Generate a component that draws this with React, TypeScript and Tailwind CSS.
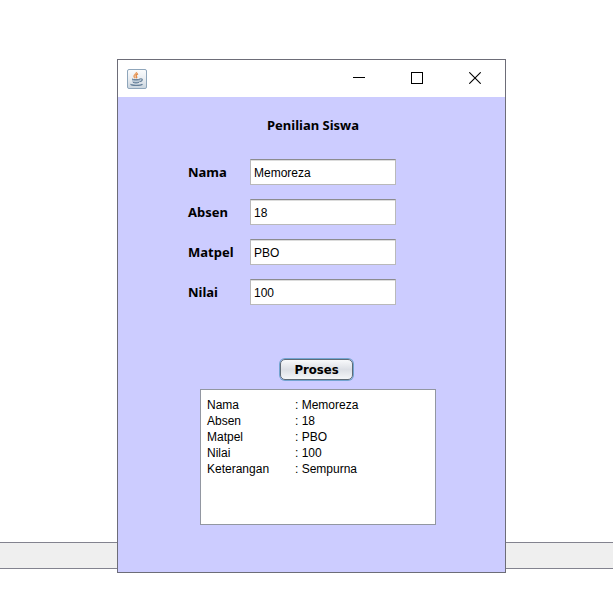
import { useState } from "react";

const FIELDS = [
  { id: "nama", label: "Nama", value: "Memoreza" },
  { id: "absen", label: "Absen", value: "18" },
  { id: "matpel", label: "Matpel", value: "PBO" },
  { id: "nilai", label: "Nilai", value: "100" },
];

const RESULT = [
  "Nama\t: Memoreza",
  "Absen\t: 18",
  "Matpel\t: PBO",
  "Nilai\t: 100",
  "Keterangan\t: Sempurna",
].join("\n");

function JavaIcon() {
  return (
    <svg width="20" height="20" viewBox="0 0 20 20" fill="none" aria-hidden="true">
      <defs>
        <linearGradient id="tile" x1="0" y1="0" x2="0" y2="1">
          <stop offset="0" stopColor="#fbfcfd" />
          <stop offset="0.5" stopColor="#e9edf1" />
          <stop offset="1" stopColor="#c9d4de" />
        </linearGradient>
      </defs>
      <rect x="0.5" y="0.5" width="19" height="19" rx="1.5" fill="url(#tile)" stroke="#8fa6bb" />
      <path d="M9.500 3c.4 1.800-2.700 2.600-2.500 4.300.1.900 1 1.300 1.200 2" stroke="#e9a064" strokeWidth="1.500" />
      <path d="M11 4.800c-2.200 1-2.300 2-1.500 2.800.4.500.2 1-.3 1.500" stroke="#e58a45" strokeWidth="1.500" />
      <path d="M5 9.800c1.500.8 6.500.8 8 0l-.8 3.800c-1.500.7-4.900.7-6.400 0z" fill="#8fa5b8" />
      <path d="M5 10c1.500.9 6.500.9 8 0M6 13.400c1.500.7 4.500.7 6 0" stroke="#66809a" />
      <path d="M5.800 11.900c1.500.6 5 .6 6.500 0" stroke="#dde5ec" strokeWidth="0.800" />
      <path d="M13 10c3.200-.7 3 2-.4 2.700" stroke="#66809a" strokeWidth="1.200" />
      <path d="M4 15c-.6 1.700 9.500 1.900 11.500.2" stroke="#66809a" strokeWidth="1.400" />
    </svg>
  );
}

function TitleBar() {
  const button = "flex h-9 w-[58px] items-center justify-center";
  return (
    <header className="flex h-[37px] items-center justify-between bg-white pr-px pl-[9px]">
      <JavaIcon />
      <div className="flex self-start">
        <button type="button" aria-label="Minimize" className={button}>
          <svg width="12" height="12" shapeRendering="crispEdges" stroke="#000">
            <path d="M0 5.500h12" />
          </svg>
        </button>
        <button type="button" aria-label="Maximize" className={button}>
          <svg width="12" height="12" shapeRendering="crispEdges" fill="none" stroke="#000">
            <rect x="0.5" y="0.5" width="11" height="11" />
          </svg>
        </button>
        <button type="button" aria-label="Close" className={button}>
          <svg width="12" height="12" stroke="#000" strokeWidth="1.100">
            <path d="M.3.3l11.400 11.400M11.700.3L.3 11.700" />
          </svg>
        </button>
      </div>
    </header>
  );
}

export default function App() {
  const [values, setValues] = useState<Record<string, string>>(
    Object.fromEntries(FIELDS.map((f) => [f.id, f.value])),
  );

  return (
    <main className="relative min-h-screen bg-white pt-[59px] pr-[107px] pl-[117px] text-black">
      <div className="absolute inset-x-0 top-[542px] h-[27px] border-y border-[#83838f] bg-[#efefef]" />
      <section className="relative border border-[#6d6d78] bg-[#ccccff] pb-[47px]">
        <TitleBar />
        <form
          className="flex flex-col items-center pt-5 font-['Noto_Sans','DejaVu_Sans',sans-serif] text-[13px] leading-4 font-bold"
          onSubmit={(e) => e.preventDefault()}
        >
          <h1 className="ml-[3px]">Penilian Siswa</h1>
          <div className="mt-[26px] mr-[39px] flex flex-col gap-[14px]">
            {FIELDS.map((f) => (
              <div key={f.id} className="flex items-center">
                <label htmlFor={f.id} className="w-[62px]">
                  {f.label}
                </label>
                <input
                  id={f.id}
                  value={values[f.id]}
                  onChange={(e) => setValues({ ...values, [f.id]: e.target.value })}
                  className="h-[26px] w-[146px] border border-[#b9b9b9] border-t-[#8c8c8f] bg-white px-[3px] pt-[2px] font-['Liberation_Sans',Arial,sans-serif] text-xs font-normal shadow-[inset_0_1px_0_#dcdcdc] outline-none"
                />
              </div>
            ))}
          </div>
          <button
            type="submit"
            className="mt-[54px] ml-[10px] h-[21px] w-[73px] rounded-[5px] border border-[#5f6b76] bg-linear-to-b from-[#f8f9fb] via-[#dcdfe5] to-[#f4f6f8] font-['DejaVu_Sans_Condensed','DejaVu_Sans',sans-serif] shadow-[0_0_0_1px_#73a4d1]"
          >
            Proses
          </button>
          <textarea
            readOnly
            aria-label="Hasil"
            value={RESULT}
            className="mt-[9px] ml-[13px] block h-[136px] w-[236px] resize-none border border-[#9297a1] bg-white px-[6px] py-[7px] font-['Liberation_Sans',Arial,sans-serif] text-xs leading-4 font-normal [tab-size:88px] outline-none"
          />
        </form>
      </section>
    </main>
  );
}
